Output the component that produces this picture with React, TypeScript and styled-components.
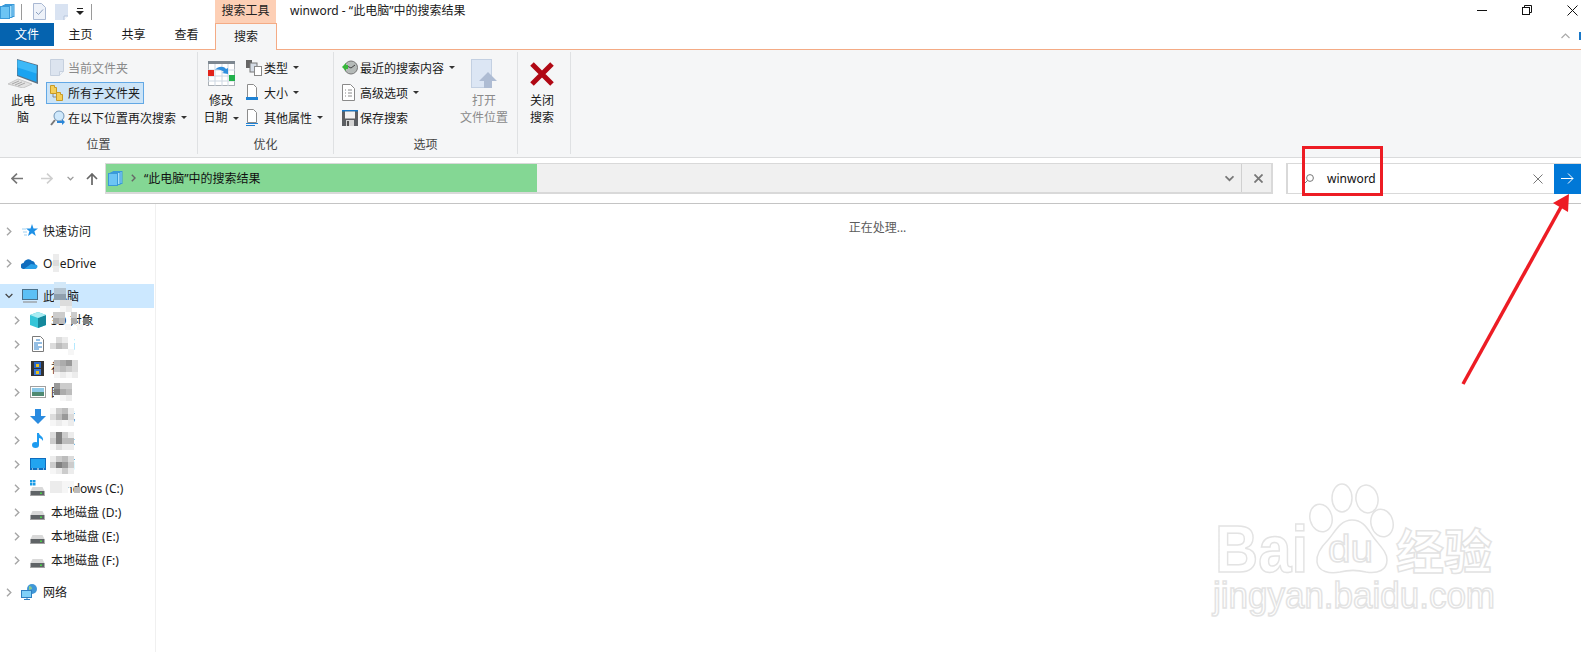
import React from "react";
import { styled, createGlobalStyle } from "styled-components";

const GlobalStyle = createGlobalStyle`
  html, body {
    margin: 0;
    height: 100%;
    overflow: hidden;
    background: #fff;
  }
  body {
    font-family: "Noto Sans", "Noto Sans CJK SC", sans-serif;
    font-size: 12px;
    color: #1a1a1a;
  }
`;

const Page = styled.div`
  position: relative;
  width: 1581px;
  height: 652px;
  display: flex;
  flex-direction: column;
  overflow: hidden;
`;

/* title bar */
const TitleBar = styled.div`
  display: flex;
  height: 23px;
  align-items: center;
`;
const QuickBar = styled.div`
  display: flex;
  align-items: center;
  width: 215px;
  height: 23px;
`;
const QuickSlot = styled.span<{ $w: number }>`
  display: flex;
  align-items: center;
  justify-content: center;
  width: ${(p) => p.$w}px;
`;
const ToolHeader = styled.div`
  width: 61px;
  height: 23px;
  line-height: 21px;
  text-align: center;
  background: #fdcfb5;
  color: #222;
`;
const WindowTitle = styled.div`
  margin-left: 14px;
  line-height: 21px;
  height: 23px;
`;
const WindowControls = styled.div`
  margin-left: auto;
  display: flex;
  align-items: flex-start;
  gap: 35px;
  height: 23px;
  padding: 5px 3px 0 0;
  box-sizing: border-box;
`;

/* tabs */
const TabStrip = styled.div`
  display: flex;
  height: 27px;
  box-sizing: border-box;
  border-bottom: 1px solid #f4ab85;
`;
const FileTab = styled.div`
  width: 54px;
  height: 23px;
  line-height: 23px;
  text-align: center;
  background: #0563af;
  color: #fff;
`;
const Tab = styled.div`
  width: 53px;
  height: 23px;
  line-height: 24px;
  text-align: center;
`;
const ActiveTab = styled.div`
  width: 62px;
  height: 27px;
  margin-left: 2px;
  box-sizing: border-box;
  border: 1px solid #f4ab85;
  border-bottom: none;
  background: #f5f6f7;
  text-align: center;
  line-height: 26px;
`;
const StripRight = styled.div`
  margin-left: auto;
  display: flex;
  align-items: center;
  height: 26px;
  gap: 9px;
`;
const HelpEdge = styled.span`
  width: 2px;
  height: 8px;
  background: #1a78c8;
`;

/* ribbon */
const Ribbon = styled.div`
  display: flex;
  height: 108px;
  box-sizing: border-box;
  padding: 2px 0 3px;
  background: #f5f6f7;
  border-bottom: 1px solid #dadbdc;
`;
const Group = styled.div<{ $w: number }>`
  width: ${(p) => p.$w}px;
  box-sizing: border-box;
  display: flex;
  flex-direction: column;
  padding-top: 3px;
  border-right: 1px solid #dfe1e3;
`;
const GroupBody = styled.div`
  flex: 1;
  display: flex;
`;
const GroupLabel = styled.div`
  height: 18px;
  line-height: 18px;
  text-align: center;
  color: #444;
`;
const BigButton = styled.div<{ $w: number; $off?: boolean }>`
  width: ${(p) => p.$w}px;
  display: flex;
  flex-direction: column;
  align-items: center;
  color: ${(p) => (p.$off ? "#8a8a8a" : "#1a1a1a")};
`;
const BigIcon = styled.div`
  height: 37px;
  display: flex;
  align-items: center;
  justify-content: center;
`;
const BigLine = styled.div`
  height: 17px;
  line-height: 17px;
  white-space: nowrap;
`;
const SmallColumn = styled.div<{ $w?: number; $pad: number }>`
  width: ${(p) => (p.$w ? `${p.$w}px` : "auto")};
  padding-left: ${(p) => p.$pad}px;
  display: flex;
  flex-direction: column;
`;
const SmallRow = styled.div<{ $off?: boolean }>`
  height: 25px;
  display: flex;
  align-items: center;
  white-space: nowrap;
  color: ${(p) => (p.$off ? "#8a8a8a" : "#1a1a1a")};
`;
const SmallIcon = styled.span`
  width: 18px;
  flex: none;
  display: flex;
  align-items: center;
`;
const Caret = styled.span`
  display: inline-block;
  margin-left: 5px;
  width: 0;
  height: 0;
  border-left: 3px solid transparent;
  border-right: 3px solid transparent;
  border-top: 3px solid #333;
  vertical-align: middle;
`;
const Highlight = styled.div`
  position: absolute;
  left: 46px;
  top: 82px;
  width: 98px;
  height: 22px;
  box-sizing: border-box;
  background: #cce4f7;
  border: 1px solid #62a8e5;
`;
const OnTop = styled.span`
  position: relative;
  display: flex;
  align-items: center;
`;

/* address row */
const AddressRow = styled.div`
  display: flex;
  height: 46px;
  box-sizing: border-box;
  padding-top: 5px;
  border-bottom: 1px solid #c4c4c4;
`;
const NavGroup = styled.div`
  width: 105px;
  height: 31px;
  flex: none;
  display: flex;
  align-items: center;
  padding-left: 11px;
  box-sizing: border-box;
`;
const NavSlot = styled.span<{ $after: number }>`
  display: flex;
  margin-right: ${(p) => p.$after}px;
`;
const AddressBox = styled.div`
  flex: 1;
  height: 31px;
  box-sizing: border-box;
  display: flex;
  background: #f0f0f0;
  border: 1px solid #d9d9d9;
  border-width: 1px 2px 2px 1px;
`;
const ProgressFill = styled.div`
  width: 431px;
  display: flex;
  align-items: center;
  background: #84d794;
  padding-left: 2px;
  box-sizing: border-box;
  color: #111;
`;
const Breadcrumb = styled.span`
  margin-left: 8px;
  margin-right: 8px;
  display: flex;
`;
const AddressSpacer = styled.div`
  flex: 1;
`;
const AddressButton = styled.div<{ $w: number; $line?: boolean }>`
  width: ${(p) => p.$w}px;
  display: flex;
  align-items: center;
  justify-content: center;
  box-sizing: border-box;
  padding-left: ${(p) => (p.$line ? 4 : 0)}px;
  border-left: ${(p) => (p.$line ? "1px solid #d0d0d0" : "none")};
`;
const SearchBox = styled.div`
  width: 295px;
  flex: none;
  height: 31px;
  margin-left: 13px;
  box-sizing: border-box;
  border: 1px solid #d9d9d9;
  border-width: 1px 0 1px 2px;
  display: flex;
  align-items: center;
`;
const SearchIcon = styled.span`
  margin-left: 16px;
  display: flex;
`;
const SearchText = styled.span`
  margin-left: 13px;
  flex: 1;
  font-size: 12px;
  color: #111;
`;
const SearchClear = styled.span`
  display: flex;
  margin-right: 11px;
`;
const GoButton = styled.div`
  width: 27px;
  height: 30px;
  background: #0078d7;
  display: flex;
  align-items: center;
  justify-content: center;
`;

/* body */
const Body = styled.div`
  flex: 1;
  display: flex;
  min-height: 0;
`;
const Sidebar = styled.div`
  width: 156px;
  flex: none;
  box-sizing: border-box;
  padding-top: 15px;
  border-right: 1px solid #f0f0f0;
`;
const TreeRow = styled.div<{ $level: number; $gap?: number; $selected?: boolean }>`
  position: relative;
  display: flex;
  align-items: center;
  width: 154px;
  height: 24px;
  margin-bottom: ${(p) => p.$gap ?? 0}px;
  padding-left: ${(p) => (p.$level === 0 ? 5 : 13)}px;
  box-sizing: border-box;
  white-space: nowrap;
  background: ${(p) => (p.$selected ? "#cce8ff" : "transparent")};
`;
const Expander = styled.span`
  width: 8px;
  flex: none;
  display: flex;
  justify-content: center;
`;
const TreeIcon = styled.span`
  width: 17px;
  margin-left: 8px;
  flex: none;
  display: flex;
  justify-content: center;
`;
const TreeLabel = styled.span`
  margin-left: 5px;
`;
const Mosaic = styled.div<{ $left: number; $top: number; $cols: number }>`
  position: absolute;
  left: ${(p) => p.$left}px;
  top: ${(p) => p.$top}px;
  display: grid;
  grid-template-columns: repeat(${(p) => p.$cols}, 6px);
  grid-auto-rows: 6px;
`;
const MosaicCell = styled.i<{ $shade: string }>`
  display: block;
  background: ${(p) => p.$shade};
`;
const Content = styled.div`
  flex: 1;
  padding: 15px 0 0 18px;
  text-align: center;
  line-height: 18px;
  color: #5c5c5c;
`;

/* screenshot annotations */
const RedBox = styled.div`
  position: absolute;
  left: 1302px;
  top: 146px;
  width: 81px;
  height: 50px;
  box-sizing: border-box;
  border: 3px solid #ed1c24;
`;
const Overlay = styled.svg<{ $x: number; $y: number }>`
  position: absolute;
  left: ${(p) => p.$x}px;
  top: ${(p) => p.$y}px;
  pointer-events: none;
`;

const shades: Record<string, string> = {
  ".": "transparent",
  w: "#ffffff",
  a: "#f6f6f6",
  b: "#ececec",
  c: "#dcdcdc",
  d: "#cccccc",
  e: "#bcbcbc",
  f: "#acacac",
  g: "#999999",
  h: "#808080",
  j: "#b3c3d0",
  k: "#8f9fad",
  l: "#d3e8f8",
};

const Blur = ({ left, top, rows }: { left: number; top: number; rows: string[] }) => (
  <Mosaic $left={left} $top={top} $cols={rows[0].length}>
    {rows.join("").split("").map((c, i) => (
      <MosaicCell key={i} $shade={shades[c]} />
    ))}
  </Mosaic>
);

/* icons */
const FolderStack = () => (
  <svg width="15" height="15" viewBox="0 0 15 15">
    <rect x="5" y="0.5" width="9" height="12" fill="#8fd3f8" stroke="#3a9ad9" />
    <rect x="3" y="1.5" width="9" height="12" fill="#a8e0fb" stroke="#3a9ad9" />
    <rect x="0.5" y="2.5" width="9" height="12" fill="#6cc4f4" stroke="#3a9ad9" />
  </svg>
);
const DocCheck = () => (
  <svg width="13" height="17" viewBox="0 0 13 17">
    <path d="M.5.5h8l4 4v12H.5z" fill="#eef2f9" stroke="#a9b8d3" />
    <path d="M3 9l2.500 2.500L10 6.500" fill="none" stroke="#8ba0c0" />
  </svg>
);
const DocBlank = () => (
  <svg width="13" height="16" viewBox="0 0 13 16">
    <path d="M0 0h13v12l-4 4H0z" fill="#d9e3f2" />
    <path d="M9 16v-4h4" fill="#f4f7fb" stroke="#b5c4dc" />
  </svg>
);
const MiniDrop = () => (
  <svg width="8" height="7" viewBox="0 0 8 7">
    <path d="M1 0h6v1H1zM0 3h8L4 7z" fill="#222" />
  </svg>
);
const VBar = () => <svg width="1" height="16"><rect width="1" height="16" fill="#9a9a9a" /></svg>;
const MinIcon = () => <svg width="10" height="10"><rect y="5" width="10" height="1" fill="#111" /></svg>;
const RestoreIcon = () => (
  <svg width="10" height="10" viewBox="0 0 10 10" fill="none" stroke="#111">
    <rect x=".5" y="2.500" width="7" height="7" />
    <path d="M2.500 2.500v-2h7v7h-2" />
  </svg>
);
const CloseIcon = () => (
  <svg width="11" height="11" viewBox="0 0 11 11" stroke="#111">
    <path d="M.5.5l10 10M10.500.5l-10 10" />
  </svg>
);
const PcIcon = () => (
  <svg width="32" height="29" viewBox="0 0 32 29">
    <path d="M1 25l10-5 14 5-9 4z" fill="#e2e2e2" stroke="#c6c6c6" />
    <path d="M5 25l7-3M8 26l7-3M11 27l7-3" stroke="#a8a8a8" />
    <path d="M10 0l21 6v19L10 17z" fill="#5d7183" />
    <path d="M10.500 1l19 5.500v16.500l-19-7z" fill="#1aa3f0" />
    <path d="M10.500 1l19 5.500v8l-19-6z" fill="#3db9f7" />
  </svg>
);
const FolderGhost = () => (
  <svg width="14" height="17" viewBox="0 0 14 17">
    <path d="M.5.500h13v12l-4 4H.5z" fill="#dce4ef" stroke="#c6d0de" />
    <path d="M9.500 16.500v-4h4" fill="#eef2f8" stroke="#c6d0de" />
  </svg>
);
const SubFolders = () => (
  <svg width="13" height="16" viewBox="0 0 13 16">
    <path d="M.5.500h4v2h2v6h-6z" fill="#f5cf5a" stroke="#c79a28" />
    <path d="M6.500 7.500h4v2h2v6h-6z" fill="#f5cf5a" stroke="#c79a28" />
    <path d="M3 9v3h3" fill="none" stroke="#888" />
  </svg>
);
const SearchAgain = () => (
  <svg width="15" height="16" viewBox="0 0 15 16">
    <circle cx="9" cy="6" r="5" fill="#cfe8fb" stroke="#6f93b5" />
    <path d="M5 10l-4 5" stroke="#777" strokeWidth="2" />
    <path d="M7 11h5v-2l3 3-3 3v-2H7z" fill="#2a86d8" />
  </svg>
);
const CalendarIcon = () => (
  <svg width="27" height="25" viewBox="0 0 27 25">
    <rect x=".5" y=".5" width="26" height="24" fill="#fff" stroke="#aab0b6" />
    <rect width="27" height="3" fill="#7d8790" />
    <path d="M0 9h27M0 15h27M0 20h27M7 3v22M14 3v22M20 3v22" stroke="#cdd7e2" />
    <rect y="9" width="6" height="6" fill="#e2231a" />
    <rect x="21" y="14" width="6" height="6" fill="#22b14c" />
    <path d="M7 9c3-4 9-4 11-1l2-1v6l-6-1 2-1c-2-2-6-3-9-2z" fill="#2f8fde" />
  </svg>
);
const TypeIcon = () => (
  <svg width="16" height="16" viewBox="0 0 16 16">
    <rect x="0" y="0" width="6" height="8" fill="#666" />
    <rect x="4" y="3" width="7" height="9" fill="#d5dce5" stroke="#777" />
    <rect x="8.500" y="6.500" width="7" height="9" fill="#fff" stroke="#888" />
  </svg>
);
const PageIcon = ({ lines }: { lines: number }) => (
  <svg width="12" height="17" viewBox="0 0 12 17">
    <path d="M1.500.5h6l3 3v10h-9z" fill="#fff" stroke="#8c8c8c" />
    {lines === 1 && <rect y="13" width="12" height="3" fill="#1f82d4" />}
    {lines === 2 && <path d="M0 14.500h12M0 16.500h9" stroke="#1f82d4" />}
  </svg>
);
const RecentIcon = () => (
  <svg width="16" height="15" viewBox="0 0 16 15">
    <circle cx="9" cy="7.500" r="6.500" fill="#b5bab8" stroke="#777" />
    <path d="M5 6l4 2 4-3" stroke="#444" fill="none" />
    <path d="M0 7l4-4v2h2v4H4v2z" fill="#37b73a" />
  </svg>
);
const AdvIcon = () => (
  <svg width="13" height="17" viewBox="0 0 13 17" fill="none" stroke="#8a8a8a">
    <path d="M.5.5h8l4 4v12H.5z" fill="#fff" />
    <path d="M3 6h1M6 6h4M3 9h1M6 9h4M3 12h1M6 12h4" />
  </svg>
);
const SaveIcon = () => (
  <svg width="16" height="16" viewBox="0 0 16 16">
    <rect width="16" height="16" fill="#5c5f63" />
    <rect width="16" height="1.500" fill="#1878c8" />
    <rect x="3" y="1.500" width="10" height="7" fill="#f2f2f2" />
    <rect x="4" y="10" width="8" height="6" fill="#d5d5d5" />
    <rect x="5" y="11" width="2" height="5" fill="#555" />
  </svg>
);
const OpenIcon = () => (
  <svg width="27" height="30" viewBox="0 0 27 30">
    <rect x=".5" y=".5" width="20" height="28" fill="#dce6f4" stroke="#c3d0e2" />
    <path d="M17 13l9 9h-5v7h-8v-7H8z" fill="#aebcd3" />
  </svg>
);
const BigX = () => (
  <svg width="26" height="26" viewBox="0 0 26 26">
    <path d="M3 3l20 20M23 3L3 23" stroke="#b00814" strokeWidth="5" />
  </svg>
);
const ArrowLeft = ({ color = "#777", flip = false }: { color?: string; flip?: boolean }) => (
  <svg width="12" height="11" viewBox="0 0 12 11" fill="none" stroke={color} strokeWidth="1.600">
    <path d={flip ? "M0 5.500h11M6 .7l5 4.800-5 4.800" : "M12 5.500H1M6 .7L1 5.500l5 4.800"} />
  </svg>
);
const SmallChevronDown = ({ color = "#777", w = 7 }: { color?: string; w?: number }) => (
  <svg width={w} height={w - 2} viewBox="0 0 8 6" fill="none" stroke={color} strokeWidth="1.500">
    <path d="M.5 1L4 4.500 7.500 1" />
  </svg>
);
const ArrowUp = () => (
  <svg width="12" height="12" viewBox="0 0 12 12" fill="none" stroke="#666" strokeWidth="1.700">
    <path d="M6 12V1M1 6l5-5 5 5" />
  </svg>
);
const ThinX = ({ color, size, width = 1 }: { color: string; size: number; width?: number }) => (
  <svg width={size} height={size} viewBox="0 0 10 10" stroke={color} strokeWidth={width}>
    <path d="M.5.5l9 9M9.500.5l-9 9" />
  </svg>
);
const Magnifier = () => (
  <svg width="10" height="10" viewBox="0 0 10 10" fill="none" stroke="#777">
    <circle cx="6" cy="4" r="3.400" />
    <path d="M3.500 6.500L.5 9.500" />
  </svg>
);
const GoArrow = () => (
  <svg width="13" height="11" viewBox="0 0 13 11" fill="none" stroke="#fff">
    <path d="M0 5.500h12M7 .5l5 5-5 5" />
  </svg>
);
const CollapseUp = () => (
  <svg width="9" height="6" viewBox="0 0 9 6" fill="none" stroke="#aaa" strokeWidth="1.200">
    <path d="M.5 5l4-4 4 4" />
  </svg>
);
const CrumbArrow = () => (
  <svg width="5" height="8" viewBox="0 0 5 8" fill="none" stroke="#666" strokeWidth="1.400">
    <path d="M.8 .7L4 4 .8 7.300" />
  </svg>
);
const TreeArrow = ({ open }: { open?: boolean }) =>
  open ? (
    <svg width="9" height="6" viewBox="0 0 9 6" fill="none" stroke="#444" strokeWidth="1.400">
      <path d="M.7 .8l3.800 3.800L8.300 .8" />
    </svg>
  ) : (
    <svg width="6" height="9" viewBox="0 0 6 9" fill="none" stroke="#a6a6a6" strokeWidth="1.400">
      <path d="M1 .7l3.800 3.800L1 8.300" />
    </svg>
  );
const StarIcon = () => (
  <svg width="16" height="14" viewBox="0 0 16 14">
    <path d="M10 0l1.500 4.500H16l-3.600 2.800L13.800 12 10 9.200 6 12l1.400-4.700L4 4.500h4.500z" fill="#1e90e6" />
    <path d="M0 5h4M1 8h4M2 11h3" stroke="#9fd0f2" />
  </svg>
);
const CloudIcon = () => (
  <svg width="17" height="11" viewBox="0 0 17 11">
    <path d="M3 11a3 3 0 0 1-.5-6A5 5 0 0 1 11 3a3.500 3.500 0 0 1 3 3.200A2.500 2.500 0 0 1 14 11z" fill="#0f6cbd" />
    <path d="M3 11l7-5 6 1a2.500 2.500 0 0 1-2 4z" fill="#2aa0e8" />
  </svg>
);
const MonitorIcon = () => (
  <svg width="16" height="15" viewBox="0 0 16 15">
    <rect x=".5" y=".5" width="15" height="10" fill="#5cc0f5" stroke="#4a6f88" />
    <rect x="1" y="12" width="14" height="2" fill="#a9b5bf" />
  </svg>
);
const CubeIcon = () => (
  <svg width="16" height="16" viewBox="0 0 16 16">
    <path d="M8 0l8 3v10l-8 3-8-3V3z" fill="#35c5d8" />
    <path d="M8 6l8-3v10l-8 3z" fill="#14889c" />
    <path d="M0 3l8-3 8 3-8 3z" fill="#a8ecf2" />
  </svg>
);
const DocTreeIcon = () => (
  <svg width="12" height="16" viewBox="0 0 12 16" fill="none">
    <path d="M.5.500h8l3 3v12H.5z" fill="#fff" stroke="#7a7a7a" />
    <path d="M4 4h4M2 7h8M2 9h4M2 11h8M2 13h5" stroke="#2a7fc8" />
  </svg>
);
const FilmIcon = () => (
  <svg width="13" height="15" viewBox="0 0 13 15">
    <rect width="13" height="15" fill="#333" />
    <rect x="3" y="1" width="7" height="6" fill="#2a68c8" />
    <rect x="3" y="8" width="7" height="6" fill="#3a78d8" />
    <rect x="5" y="3" width="3" height="3" fill="#e8c020" />
    <rect x="5" y="10" width="3" height="3" fill="#e8c020" />
  </svg>
);
const PictureIcon = () => (
  <svg width="16" height="12" viewBox="0 0 16 12">
    <rect x=".5" y=".5" width="15" height="11" fill="#fff" stroke="#a0a0a0" />
    <rect x="2" y="2" width="12" height="4" fill="#8cc8e8" />
    <rect x="2" y="6" width="12" height="4" fill="#4f8a72" />
  </svg>
);
const DownIcon = () => (
  <svg width="16" height="15" viewBox="0 0 16 15">
    <path d="M5 0h6v7h5l-8 8-8-8h5z" fill="#2a8be0" />
  </svg>
);
const NoteIcon = () => (
  <svg width="12" height="16" viewBox="0 0 12 16">
    <ellipse cx="3.500" cy="13" rx="3.500" ry="3" fill="#1e9bf0" />
    <path d="M5 1h2c0 3 5 3 4 8-1-2-3-3-4-3v7H5z" fill="#1e9bf0" />
  </svg>
);
const DesktopIcon = () => (
  <svg width="16" height="12" viewBox="0 0 16 12">
    <rect width="16" height="12" fill="#0f6cbd" />
    <rect x="1" y="1" width="14" height="9" fill="#22a4f0" />
    <path d="M2 11h1M7 11h2M13 11h1" stroke="#fff" />
  </svg>
);
const DriveIcon = ({ win }: { win?: boolean }) => (
  <svg width="15" height="17" viewBox="0 0 15 17">
    {win && <path d="M0 0h2.500v2.500H0zM3 0h2.500v2.500H3zM0 3h2.500v2.500H0zM3 3h2.500v2.500H3z" fill="#1a9be6" />}
    <path d="M2.500 7h10l2 4H.5z" fill="#d9d9d9" />
    <rect x=".5" y="11" width="14" height="5" fill="#5f6366" />
    <rect x=".5" y="15" width="14" height="1" fill="#a0a0a0" />
    <rect x="10" y="12.500" width="2" height="1.500" fill="#46d246" />
  </svg>
);
const NetworkIcon = () => (
  <svg width="17" height="16" viewBox="0 0 17 16">
    <circle cx="11" cy="5" r="5" fill="#3f97d8" />
    <path d="M8 2c2 0 3 1 3 3l-3 1z" fill="#8fc98a" />
    <rect x=".5" y="6.500" width="10" height="7" fill="#7fd0f8" stroke="#2f7fc0" />
    <path d="M3 15.500h6M6 13.500v2" stroke="#2f7fc0" />
  </svg>
);

const tree = [
  { level: 1, icon: <CubeIcon />, label: "3D 对象", blur: { left: 53, top: 4, rows: ["dd.d...", "fe.f.h.", "..a.a.."] } },
  { level: 1, icon: <DocTreeIcon />, label: "文档", blur: { left: 50, top: 5, rows: ["wcbw", "cedw", "wwwa"] } },
  { level: 1, icon: <FilmIcon />, label: "视频", blur: { left: 54, top: 4, rows: ["efgc", "dedc", "abab"] } },
  { level: 1, icon: <PictureIcon />, label: "图片", blur: { left: 54, top: 3, rows: ["gddw", "hfew", "wabw"] } },
  { level: 1, icon: <DownIcon />, label: "下载", blur: { left: 50, top: 4, rows: ["adeb", "cegc", "abab"] } },
  { level: 1, icon: <NoteIcon />, label: "音乐", blur: { left: 50, top: 4, rows: ["chdb", "dhee", "acbb"] } },
  { level: 1, icon: <DesktopIcon />, label: "桌面", blur: { left: 50, top: 4, rows: ["bdec", "dhgd", "abdb"] } },
  { level: 1, icon: <DriveIcon win />, label: "Windows (C:)", blur: { left: 50, top: 5, rows: ["bbaa.", "bba.e"] } },
  { level: 1, icon: <DriveIcon />, label: "本地磁盘 (D:)" },
  { level: 1, icon: <DriveIcon />, label: "本地磁盘 (E:)" },
];

const App = () => {
  return (
    <Page>
      <GlobalStyle />
      <TitleBar>
        <QuickBar>
          <QuickSlot $w={15}><FolderStack /></QuickSlot>
          <QuickSlot $w={12}><VBar /></QuickSlot>
          <QuickSlot $w={24}><DocCheck /></QuickSlot>
          <QuickSlot $w={21}><DocBlank /></QuickSlot>
          <QuickSlot $w={15}><MiniDrop /></QuickSlot>
          <QuickSlot $w={8}><VBar /></QuickSlot>
        </QuickBar>
        <ToolHeader>搜索工具</ToolHeader>
        <WindowTitle>winword - “此电脑”中的搜索结果</WindowTitle>
        <WindowControls>
          <MinIcon />
          <RestoreIcon />
          <CloseIcon />
        </WindowControls>
      </TitleBar>

      <TabStrip>
        <FileTab>文件</FileTab>
        <Tab>主页</Tab>
        <Tab>共享</Tab>
        <Tab>查看</Tab>
        <ActiveTab>搜索</ActiveTab>
        <StripRight>
          <CollapseUp />
          <HelpEdge />
        </StripRight>
      </TabStrip>

      <Ribbon>
        <Highlight />
        <Group $w={198}>
          <GroupBody>
            <BigButton $w={46}>
              <BigIcon><PcIcon /></BigIcon>
              <BigLine>此电</BigLine>
              <BigLine>脑</BigLine>
            </BigButton>
            <SmallColumn $pad={4}>
              <SmallRow $off>
                <SmallIcon><FolderGhost /></SmallIcon>当前文件夹
              </SmallRow>
              <SmallRow>
                <OnTop>
                  <SmallIcon><SubFolders /></SmallIcon>所有子文件夹
                </OnTop>
              </SmallRow>
              <SmallRow>
                <SmallIcon><SearchAgain /></SmallIcon>在以下位置再次搜索<Caret />
              </SmallRow>
            </SmallColumn>
          </GroupBody>
          <GroupLabel>位置</GroupLabel>
        </Group>
        <Group $w={136}>
          <GroupBody>
            <BigButton $w={46}>
              <BigIcon><CalendarIcon /></BigIcon>
              <BigLine>修改</BigLine>
              <BigLine>日期<Caret /></BigLine>
            </BigButton>
            <SmallColumn $pad={2}>
              <SmallRow>
                <SmallIcon><TypeIcon /></SmallIcon>类型<Caret />
              </SmallRow>
              <SmallRow>
                <SmallIcon><PageIcon lines={1} /></SmallIcon>大小<Caret />
              </SmallRow>
              <SmallRow>
                <SmallIcon><PageIcon lines={2} /></SmallIcon>其他属性<Caret />
              </SmallRow>
            </SmallColumn>
          </GroupBody>
          <GroupLabel>优化</GroupLabel>
        </Group>
        <Group $w={184}>
          <GroupBody>
            <SmallColumn $w={112} $pad={8}>
              <SmallRow>
                <SmallIcon><RecentIcon /></SmallIcon>最近的搜索内容<Caret />
              </SmallRow>
              <SmallRow>
                <SmallIcon><AdvIcon /></SmallIcon>高级选项<Caret />
              </SmallRow>
              <SmallRow>
                <SmallIcon><SaveIcon /></SmallIcon>保存搜索
              </SmallRow>
            </SmallColumn>
            <BigButton $w={60} $off>
              <BigIcon><OpenIcon /></BigIcon>
              <BigLine>打开</BigLine>
              <BigLine>文件位置</BigLine>
            </BigButton>
          </GroupBody>
          <GroupLabel>选项</GroupLabel>
        </Group>
        <Group $w={53}>
          <GroupBody>
            <BigButton $w={48}>
              <BigIcon><BigX /></BigIcon>
              <BigLine>关闭</BigLine>
              <BigLine>搜索</BigLine>
            </BigButton>
          </GroupBody>
        </Group>
      </Ribbon>

      <AddressRow>
        <NavGroup>
          <NavSlot $after={18}><ArrowLeft /></NavSlot>
          <NavSlot $after={14}><ArrowLeft color="#cfcfcf" flip /></NavSlot>
          <NavSlot $after={12}><SmallChevronDown color="#999" w={7} /></NavSlot>
          <NavSlot $after={0}><ArrowUp /></NavSlot>
        </NavGroup>
        <AddressBox>
          <ProgressFill>
            <FolderStack />
            <Breadcrumb>
              <CrumbArrow />
            </Breadcrumb>
            “此电脑”中的搜索结果
          </ProgressFill>
          <AddressSpacer />
          <AddressButton $w={24}><SmallChevronDown color="#777" w={9} /></AddressButton>
          <AddressButton $w={30} $line><ThinX color="#777" size={9} width={2} /></AddressButton>
        </AddressBox>
        <SearchBox>
          <SearchIcon><Magnifier /></SearchIcon>
          <SearchText>winword</SearchText>
          <SearchClear><ThinX color="#777" size={10} /></SearchClear>
          <GoButton><GoArrow /></GoButton>
        </SearchBox>
      </AddressRow>

      <Body>
        <Sidebar>
          <TreeRow $level={0} $gap={8}>
            <Expander><TreeArrow /></Expander>
            <TreeIcon><StarIcon /></TreeIcon>
            <TreeLabel>快速访问</TreeLabel>
          </TreeRow>
          <TreeRow $level={0} $gap={9}>
            <Expander><TreeArrow /></Expander>
            <TreeIcon><CloudIcon /></TreeIcon>
            <TreeLabel>OneDrive</TreeLabel>
            <Blur left={53} top={3} rows={["b", "c", "b"]} />
          </TreeRow>
          <TreeRow $level={0} $selected>
            <Expander><TreeArrow open /></Expander>
            <TreeIcon><MonitorIcon /></TreeIcon>
            <TreeLabel>此电脑</TreeLabel>
            <Blur left={54} top={-2} rows={["ll.", "jj.", "kk.", "lcc", ".ab"]} />
          </TreeRow>
          {tree.map((item) => (
            <TreeRow key={item.label} $level={item.level}>
              <Expander><TreeArrow /></Expander>
              <TreeIcon>{item.icon}</TreeIcon>
              <TreeLabel>{item.label}</TreeLabel>
              {item.blur && <Blur {...item.blur} />}
            </TreeRow>
          ))}
          <TreeRow $level={1} $gap={8}>
            <Expander><TreeArrow /></Expander>
            <TreeIcon><DriveIcon /></TreeIcon>
            <TreeLabel>本地磁盘 (F:)</TreeLabel>
          </TreeRow>
          <TreeRow $level={0}>
            <Expander><TreeArrow /></Expander>
            <TreeIcon><NetworkIcon /></TreeIcon>
            <TreeLabel>网络</TreeLabel>
          </TreeRow>
        </Sidebar>
        <Content>正在处理...</Content>
      </Body>

      <RedBox />
      <Overlay $x={1450} $y={190} width="131" height="200">
        <path d="M13 194L111 17" stroke="#ed1c24" strokeWidth="3.500" />
        <path d="M119 4L103 13l15 9z" fill="#ed1c24" />
      </Overlay>
      <Overlay $x={1190} $y={460} width="391" height="192">
        <g fill="#fff" stroke="#e3e3e3" strokeWidth="1.500">
          <ellipse cx="131" cy="58" rx="11" ry="14" transform="rotate(-15 131 58)" />
          <ellipse cx="152" cy="38" rx="10" ry="14" />
          <ellipse cx="177" cy="39" rx="11" ry="14" transform="rotate(-10 177 39)" />
          <ellipse cx="192" cy="63" rx="11" ry="14" transform="rotate(-15 192 63)" />
          <path d="M162 60C150 60 145 72 138 80C130 88 126 95 127 102C128 112 140 114 150 112C158 110 168 110 176 112C188 114 197 110 197 100C197 92 190 86 184 78C178 70 174 60 162 60Z" />
          <text x="25" y="112" fontFamily="Liberation Sans" fontWeight="700" fontSize="66" textLength="93" lengthAdjust="spacingAndGlyphs">Bai</text>
          <text x="138" y="102" fontFamily="Liberation Sans" fontSize="38" textLength="45" lengthAdjust="spacingAndGlyphs">du</text>
          <text x="206" y="109" fontFamily="Noto Sans CJK SC" fontWeight="700" fontSize="48">经验</text>
          <text x="23" y="148" fontFamily="Liberation Sans" fontSize="36" textLength="282" lengthAdjust="spacingAndGlyphs">jingyan.baidu.com</text>
        </g>
      </Overlay>
    </Page>
  );
};

export default App;
